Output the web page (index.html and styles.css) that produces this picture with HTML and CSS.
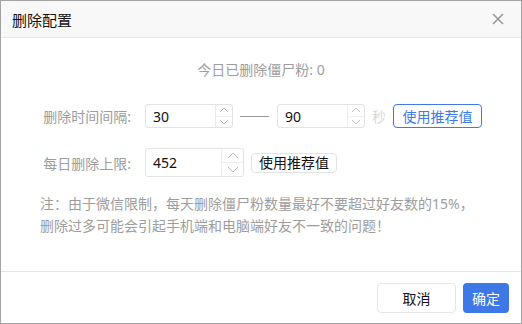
FILE: index.html
```html
<!DOCTYPE html>
<html lang="zh-CN">
    <head>
        <meta charset="utf-8">
        <title>删除配置</title>
        <link rel="stylesheet" href="styles.css">
    </head>
    <body>
        <div class="dialog">
            <header class="dialog-head">
                <span class="dialog-title">删除配置</span>
                <svg class="close" width="12" height="12" viewBox="0 0 12 12">
                    <path d="M1 1L11 11M11 1L1 11" stroke="#9a9a9a" stroke-width="1.6" fill="none"/>
                </svg>
            </header>

            <main class="dialog-body">
                <div class="stat">今日已删除僵尸粉: 0</div>

                <div class="row row-interval">
                    <label class="label">删除时间间隔:</label>
                    <div class="num num-small">
                        <span class="num-value">30</span>
                        <div class="spin">
                            <span class="spin-btn"><svg width="10" height="6" viewBox="0 0 10 6"><path d="M1 5L5 1L9 5" stroke="#bdbdbd" fill="none"/></svg></span>
                            <span class="spin-btn"><svg width="10" height="6" viewBox="0 0 10 6"><path d="M1 1L5 5L9 1" stroke="#bdbdbd" fill="none"/></svg></span>
                        </div>
                    </div>
                    <span class="dash"></span>
                    <div class="num num-small">
                        <span class="num-value">90</span>
                        <div class="spin">
                            <span class="spin-btn"><svg width="10" height="6" viewBox="0 0 10 6"><path d="M1 5L5 1L9 5" stroke="#bdbdbd" fill="none"/></svg></span>
                            <span class="spin-btn"><svg width="10" height="6" viewBox="0 0 10 6"><path d="M1 1L5 5L9 1" stroke="#bdbdbd" fill="none"/></svg></span>
                        </div>
                    </div>
                    <span class="unit">秒</span>
                    <button class="btn btn-outline">使用推荐值</button>
                </div>

                <div class="row row-limit">
                    <label class="label">每日删除上限:</label>
                    <div class="num num-large">
                        <span class="num-value">452</span>
                        <div class="spin">
                            <span class="spin-btn"><svg width="12" height="7" viewBox="0 0 12 7"><path d="M1 6L6 1L11 6" stroke="#bdbdbd" fill="none"/></svg></span>
                            <span class="spin-btn"><svg width="12" height="7" viewBox="0 0 12 7"><path d="M1 1L6 6L11 1" stroke="#bdbdbd" fill="none"/></svg></span>
                        </div>
                    </div>
                    <button class="btn btn-plain">使用推荐值</button>
                </div>

                <p class="note">注：由于微信限制，每天删除僵尸粉数量最好不要超过好友数的15%，<br>删除过多可能会引起手机端和电脑端好友不一致的问题！</p>
            </main>

            <footer class="dialog-foot">
                <button class="btn btn-cancel">取消</button>
                <button class="btn btn-primary">确定</button>
            </footer>
        </div>
    </body>
</html>
```

FILE: styles.css
```css
html {
    font-family: "Noto Sans", "Noto Sans CJK SC", sans-serif;
    font-size: 14px;
    color: #222;
}

body {
    margin: 0;
}

.dialog {
    box-sizing: border-box;
    width: 522px;
    height: 324px;
    border: 1px solid #a3a3a3;
    background-color: #fff;
    display: flex;
    flex-direction: column;
}

.dialog-head {
    height: 36px;
    background-color: #f8f8f8;
    border-bottom: 1px solid #e6e6e6;
    display: flex;
    align-items: center;
    justify-content: space-between;
    padding: 0 17px 0 11px;
}

.dialog-title {
    font-size: 15px;
    color: #111;
}

.dialog-body {
    flex: 1;
}

.stat {
    margin-top: 22px;
    line-height: 20px;
    text-align: center;
    color: #9d9d9d;
}

.row {
    display: flex;
    align-items: center;
}

.row-interval {
    margin-top: 24px;
}

.row-limit {
    margin-top: 20px;
}

.label {
    width: 130px;
    margin-right: 14px;
    text-align: right;
    color: #9d9d9d;
}

.num {
    box-sizing: border-box;
    display: flex;
    border: 1px solid #e3e3e3;
    border-radius: 3px;
}

.num-small {
    width: 88px;
    height: 24px;
}

.num-large {
    width: 99px;
    height: 29px;
}

.num-value {
    flex: 1;
    padding-left: 7px;
    display: flex;
    align-items: center;
    color: #111;
}

.spin {
    display: flex;
    flex-direction: column;
    border-left: 1px solid #ececec;
}

.num-small .spin {
    width: 16px;
}

.num-large .spin {
    width: 21px;
}

.spin-btn {
    flex: 1;
    display: flex;
    align-items: center;
    justify-content: center;
}

.spin-btn + .spin-btn {
    border-top: 1px solid #f0f0f0;
}

.dash {
    width: 29px;
    height: 1px;
    margin: 0 8px 0 7px;
    background-color: #9a9a9a;
}

.unit {
    margin: 0 7px;
    color: #d8d8d8;
}

.btn {
    font-family: inherit;
    font-size: 14px;
    box-sizing: border-box;
    border-radius: 4px;
    background-color: #fff;
    padding: 0;
    cursor: pointer;
}

.btn-outline {
    width: 89px;
    height: 24px;
    border: 1px solid #3d7ae6;
    color: #3d7ae6;
}

.btn-plain {
    width: 86px;
    height: 20px;
    margin-left: 7px;
    border: 1px solid #e3e3e3;
    color: #111;
    line-height: 18px;
}

.note {
    margin: 16px 0 0 39px;
    line-height: 22px;
    color: #9d9d9d;
}

.dialog-foot {
    height: 52px;
    border-top: 1px solid #e6e6e6;
    display: flex;
    justify-content: flex-end;
    align-items: flex-start;
    gap: 7px;
    padding: 11px 12px 0 0;
    box-sizing: border-box;
}

.btn-cancel {
    width: 79px;
    height: 30px;
    border: 1px solid #e6e6e6;
    color: #111;
}

.btn-primary {
    width: 46px;
    height: 30px;
    border: none;
    background-color: #3d78e6;
    color: #fff;
}
```
